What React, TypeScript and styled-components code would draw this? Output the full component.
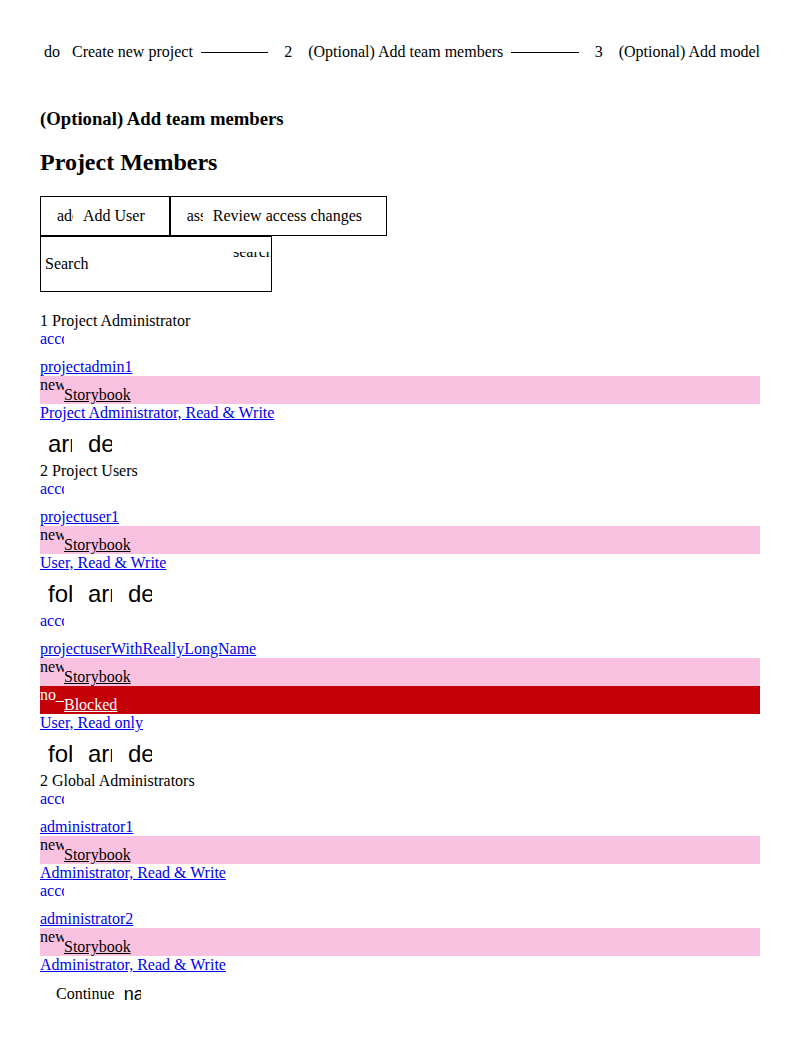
import styled, { createGlobalStyle } from "styled-components";

type Chip = {
  icon: string;
  label: string;
  blocked?: boolean;
};

type Member = {
  name: string;
  chips: Chip[];
  role: string;
  actions: string[];
};

type Group = {
  title: string;
  members: Member[];
};

const storybook: Chip = { icon: "new_releases", label: "Storybook" };

const groups: Group[] = [
  {
    title: "1 Project Administrator",
    members: [
      {
        name: "projectadmin1",
        chips: [storybook],
        role: "Project Administrator, Read & Write",
        actions: ["arrow_downward", "delete"],
      },
    ],
  },
  {
    title: "2 Project Users",
    members: [
      {
        name: "projectuser1",
        chips: [storybook],
        role: "User, Read & Write",
        actions: ["folder_shared", "arrow_upward", "delete"],
      },
      {
        name: "projectuserWithReallyLongName",
        chips: [storybook, { icon: "no_accounts", label: "Blocked", blocked: true }],
        role: "User, Read only",
        actions: ["folder_shared", "arrow_upward", "delete"],
      },
    ],
  },
  {
    title: "2 Global Administrators",
    members: [
      { name: "administrator1", chips: [storybook], role: "Administrator, Read & Write", actions: [] },
      { name: "administrator2", chips: [storybook], role: "Administrator, Read & Write", actions: [] },
    ],
  },
];

const steps = [
  { icon: "done", label: "Create new project" },
  { icon: "2", label: "(Optional) Add team members" },
  { icon: "3", label: "(Optional) Add model" },
];

const GlobalStyle = createGlobalStyle`
  body {
    margin: 8px;
    background: #fff;
    color: #000;
    font-family: "Liberation Serif", serif;
    font-size: 16px;
  }
`;

const Page = styled.div`
  padding: 32px;
`;

const Stepper = styled.div`
  display: flex;
  align-items: center;
  gap: 8px;
  height: 24px;
  margin-bottom: 43.5px;
`;

const StepIcon = styled.div`
  width: 24px;
  height: 24px;
  display: flex;
  align-items: center;
  justify-content: center;
  flex-shrink: 0;
`;

// ligature icons without their font: text clipped to the icon box
const Clip = styled.span<{ $w: number }>`
  display: inline-block;
  width: ${(p) => p.$w}px;
  overflow: hidden;
  white-space: nowrap;
  flex-shrink: 0;
`;

const StepLabel = styled.span`
  white-space: nowrap;
`;

const StepLine = styled.div`
  flex: 1;
  height: 1px;
  background: #000;
`;

const SubTitle = styled.h3`
  font-size: 18.72px;
  margin: 18.72px 0 0;
`;

const Title = styled.h2`
  font-size: 24px;
  margin: 19.92px 0;
`;

const Toolbar = styled.div`
  display: flex;
`;

const ToolButton = styled.button`
  display: flex;
  align-items: center;
  gap: 10px;
  height: 40px;
  padding: 0 24px 0 16px;
  border: 1px solid #000;
  background: #fff;
  color: #000;
  font-family: "Liberation Serif", serif;
  font-size: 16px;
`;

const SearchBox = styled.div`
  position: relative;
  width: 232px;
  height: 56px;
  box-sizing: border-box;
  border: 1px solid #000;
  overflow: hidden;
  display: flex;
  align-items: center;
  padding-left: 4px;
`;

const SearchAdornment = styled.span`
  position: absolute;
  left: 192px;
  top: 15px;
  width: 40px;
  height: 20px;
  overflow: hidden;
`;

const SearchIcon = styled.span`
  display: block;
  margin-top: -9px;
  white-space: nowrap;
`;

const Groups = styled.div`
  margin-top: 19.5px;
`;

const GroupTitle = styled.div``;

const AvatarLine = styled.div`
  color: #0000ee;
`;

const BoxIcon = styled.span`
  display: inline-block;
  width: 24px;
  height: 24px;
  overflow: hidden;
  white-space: nowrap;
`;

const NameLink = styled.a`
  display: block;
  color: #0000ee;
  text-decoration: underline;
  width: fit-content;
`;

const ChipBar = styled.div<{ $blocked?: boolean }>`
  background: ${(p) => (p.$blocked ? "#c30008" : "#fac2e1")};
  color: ${(p) => (p.$blocked ? "#fff" : "#000")};
`;

const ChipLink = styled.a`
  color: inherit;
  text-decoration: underline;
`;

const Actions = styled.div`
  display: flex;
`;

const IconButton = styled.button`
  width: 40px;
  height: 40px;
  padding: 8px;
  border: none;
  background: transparent;
  color: #000;
`;

const ActionIcon = styled.span`
  display: block;
  width: 24px;
  height: 24px;
  overflow: hidden;
  white-space: nowrap;
  font-family: "Liberation Sans", sans-serif;
  font-size: 24px;
`;

const ContinueButton = styled.button`
  display: flex;
  align-items: center;
  gap: 9px;
  height: 40px;
  padding: 0 16px;
  border: none;
  background: transparent;
  color: #000;
  font-family: "Liberation Serif", serif;
  font-size: 16px;
`;

const NextIcon = styled.span`
  width: 17px;
  overflow: hidden;
  white-space: nowrap;
  font-family: "Liberation Sans", sans-serif;
  font-size: 18px;
  margin-top: 2px;
`;

const MemberItem = ({ member }: { member: Member }) => (
  <div>
    <AvatarLine>
      <BoxIcon>account_circle</BoxIcon>
    </AvatarLine>
    <NameLink href="#">{member.name}</NameLink>
    {member.chips.map((chip) => (
      <ChipBar key={chip.label} $blocked={chip.blocked}>
        <BoxIcon>{chip.icon}</BoxIcon>
        <ChipLink href="#">{chip.label}</ChipLink>
      </ChipBar>
    ))}
    <NameLink href="#">{member.role}</NameLink>
    {member.actions.length > 0 && (
      <Actions>
        {member.actions.map((a) => (
          <IconButton key={a}>
            <ActionIcon>{a}</ActionIcon>
          </IconButton>
        ))}
      </Actions>
    )}
  </div>
);

export default function App() {
  return (
    <Page>
      <GlobalStyle />
      <Stepper>
        {steps.map((step, i) => (
          <>
            <StepIcon key={step.label}>
              {step.icon.length > 1 ? <Clip $w={16}>{step.icon}</Clip> : step.icon}
            </StepIcon>
            <StepLabel>{step.label}</StepLabel>
            {i < steps.length - 1 && <StepLine />}
          </>
        ))}
      </Stepper>

      <SubTitle>(Optional) Add team members</SubTitle>
      <Title>Project Members</Title>

      <Toolbar>
        <ToolButton>
          <Clip $w={16}>add</Clip>
          Add User
        </ToolButton>
        <ToolButton>
          <Clip $w={16}>assignment</Clip>
          Review access changes
        </ToolButton>
      </Toolbar>
      <SearchBox>
        <span>Search</span>
        <SearchAdornment>
          <SearchIcon>search</SearchIcon>
        </SearchAdornment>
      </SearchBox>

      <Groups>
        {groups.map((group) => (
          <div key={group.title}>
            <GroupTitle>{group.title}</GroupTitle>
            {group.members.map((m) => (
              <MemberItem key={m.name} member={m} />
            ))}
          </div>
        ))}
      </Groups>

      <ContinueButton>
        Continue
        <NextIcon>navigate_next</NextIcon>
      </ContinueButton>
    </Page>
  );
}
